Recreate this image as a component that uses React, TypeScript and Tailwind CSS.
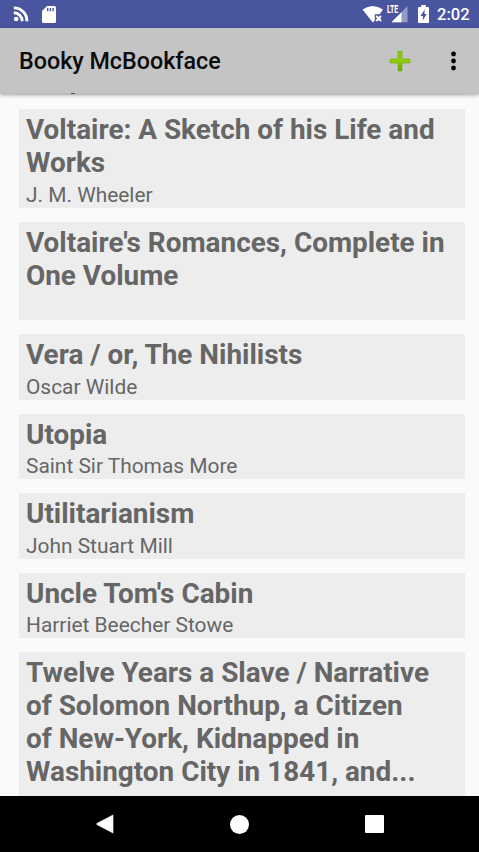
const books = [
  { lines: ['Voltaire: A Sketch of his Life and', 'Works'], author: 'J. M. Wheeler' },
  { lines: ["Voltaire's Romances, Complete in", 'One Volume'], author: '' },
  { lines: ['Vera / or, The Nihilists'], author: 'Oscar Wilde' },
  { lines: ['Utopia'], author: 'Saint Sir Thomas More' },
  { lines: ['Utilitarianism'], author: 'John Stuart Mill' },
  { lines: ["Uncle Tom's Cabin"], author: 'Harriet Beecher Stowe' },
  {
    lines: [
      'Twelve Years a Slave / Narrative',
      'of Solomon Northup, a Citizen',
      'of New-York, Kidnapped in',
      'Washington City in 1841, and...',
    ],
    author: 'Solomon Northup',
  },
];

function StatusBar() {
  return (
    <div className="flex h-7 shrink-0 items-center bg-[#4a55a0] text-white">
      <svg className="ml-[13px] h-4 w-4" viewBox="0 0 16 16" fill="none" stroke="white">
        <circle cx="3.200" cy="13" r="2.300" fill="white" stroke="none" />
        <path d="M.8 6.700a8.300 8.300 0 0 1 8.300 8.600M.8 1.900a13 13 0 0 1 13.100 13.400" strokeWidth="2.900" />
      </svg>
      <svg className="ml-[13px] h-[17px] w-[14px]" viewBox="0 0 14 17">
        <path d="M5 0h7.500Q14 0 14 1.500v14q0 1.500-1.500 1.500h-11Q0 17 0 15.500V5z" fill="white" />
        <path d="M5.700 2v3.300M8.400 2v3.300M11.100 2v3.300" stroke="#4a55a0" strokeWidth="1.400" />
      </svg>
      <div className="grow" />
      <svg className="h-[18px] w-[22px]" viewBox="0 0 22 18">
        <path d="M.5 4.600Q10.800-2.600 21 4.600L17.600 9.300h-4.800v6.300L10.800 17.500z" fill="white" />
        <path d="m14.300 11 4.700 5m0-5-4.700 5" stroke="white" strokeWidth="1.900" />
      </svg>
      <div className="relative ml-[3px] h-[18px] w-[21px]">
        <svg className="h-[18px] w-[21px]" viewBox="0 0 21 18">
          <path d="M20.500 1v16.300H4.500z" fill="white" opacity=".4" />
          <path d="M14.500 7.200v10.100H4.500z" fill="white" />
        </svg>
        <span className="absolute top-0 left-0 origin-left scale-x-[.66] text-[10.500px] leading-[9px] font-extrabold">LTE</span>
      </div>
      <svg className="ml-[10px] h-[18px] w-[11px]" viewBox="0 0 12 18" preserveAspectRatio="none">
        <path d="M3.500 0h5v2H11q1 0 1 1v14q0 1-1 1H1q-1 0-1-1V3q0-1 1-1h2.500z" fill="white" />
        <path d="M7.300 4.500 2.700 11h2.600v4.300L9.500 9H7z" fill="#4a55a0" />
      </svg>
      <span className="mr-[9px] ml-[8px] w-[33px] pt-[2px] text-[16.600px] leading-7 font-medium whitespace-nowrap">2:02</span>
    </div>
  );
}

function AppBar() {
  return (
    <header className="z-10 shrink-0 bg-[#c4c4c4] shadow-[0_1px_4px_rgba(0,0,0,.35)]">
      <div className="flex h-[65px] items-center pl-[19px]">
        <h1 className="grow pt-px text-[23.300px] leading-8 font-medium text-[#0b0b0b]">Booky McBookface</h1>
        <svg className="h-[22px] w-[22px]" viewBox="0 0 22 22">
          <defs>
            <linearGradient id="plus" x1="0" y1="0" x2="0" y2="1">
              <stop offset="0" stopColor="#8abf18" />
              <stop offset=".45" stopColor="#91d000" />
              <stop offset="1" stopColor="#63a900" />
            </linearGradient>
          </defs>
          <path d="M9 1h4v8h8v4h-8v8H9v-8H1V9h8z" fill="url(#plus)" stroke="#79ae1c" strokeWidth=".6" strokeLinejoin="round" />
        </svg>
        <svg className="mr-[22px] ml-[39px] h-5 w-[7px]" viewBox="0 0 7 20" fill="black">
          <circle cx="3.500" cy="3" r="2.400" />
          <circle cx="3.500" cy="10" r="2.400" />
          <circle cx="3.500" cy="17" r="2.400" />
        </svg>
      </div>
      {/* Edge of the row scrolled behind the bar */}
      <div className="h-px bg-[#bdbdbd] pl-[71px]">
        <div className="h-px w-[4px] bg-[#555]" />
      </div>
    </header>
  );
}

function NavBar() {
  return (
    <nav className="flex h-14 shrink-0 items-center bg-black pl-24">
      <svg className="h-5 w-[18px]" viewBox="0 0 18 20">
        <path d="M17 1v18L.8 10.500v-1z" fill="white" stroke="white" strokeWidth=".6" strokeLinejoin="round" />
      </svg>
      <div className="ml-[116px] h-[19px] w-[19px] rounded-full bg-white" />
      <div className="ml-[116px] h-[18px] w-[19px] rounded-[1px] bg-white" />
    </nav>
  );
}

export default function App() {
  return (
    <div className="flex h-[852px] w-[479px] flex-col overflow-hidden bg-[#fafafa] font-[Roboto,sans-serif]">
      <StatusBar />
      <AppBar />
      <main className="min-h-0 grow overflow-hidden pr-[14px] pl-[19px]">
        <div className="h-[1.400px] bg-[#ededed]" />
        <div className="mt-[14px] flex flex-col gap-[14px]">
          {books.map((book) => (
            <article key={book.lines[0]} className="bg-[#ededed] px-[7px] pt-[3.850px] pb-[.350px]">
              <h2 className="text-[27.900px] leading-[33px] font-bold whitespace-nowrap text-[#666]">
                {book.lines.map((line) => (
                  <span key={line} className="block">{line}</span>
                ))}
              </h2>
              <p className="mt-[3.800px] h-[24.500px] text-[20.900px] leading-[24.500px] text-[#666]">{book.author}</p>
            </article>
          ))}
        </div>
      </main>
      <NavBar />
    </div>
  );
}
